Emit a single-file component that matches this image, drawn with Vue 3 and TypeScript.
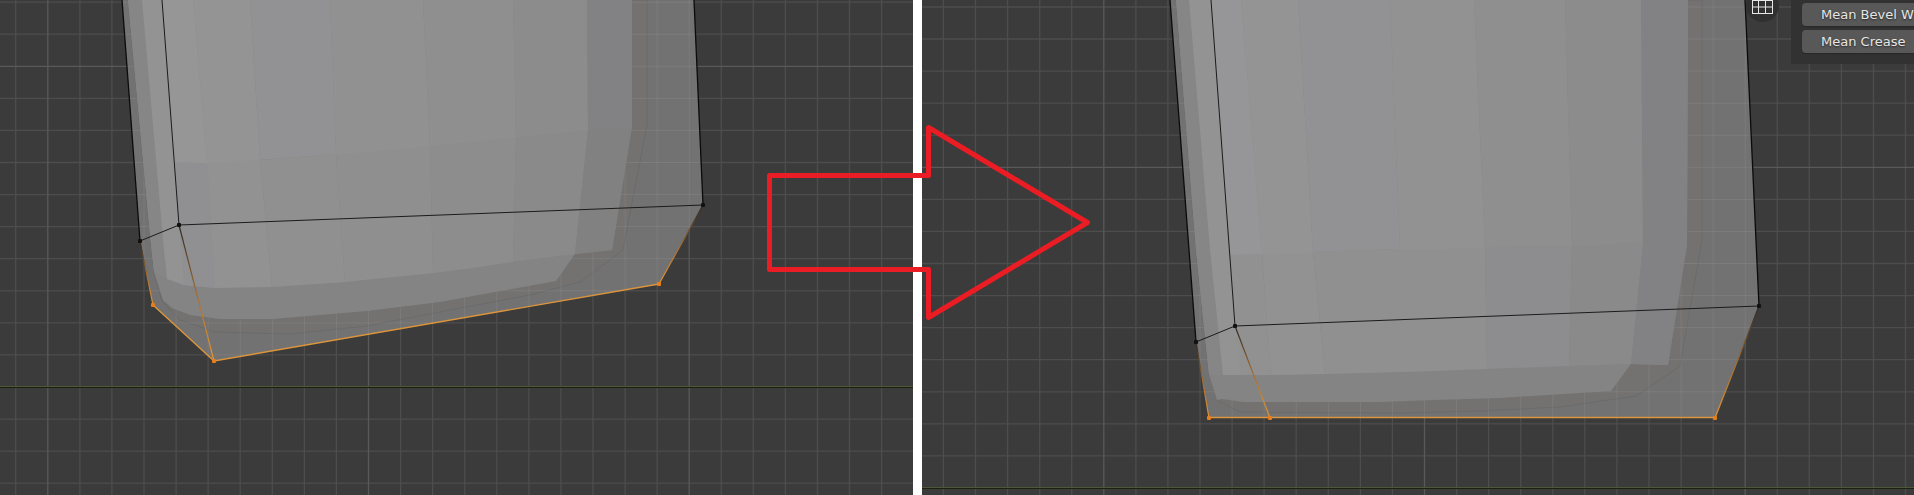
<script setup lang="ts">
interface Face { points: string; fill: string }
interface Vertex { x: number; y: number; selected: boolean }
interface View {
  id: string
  label: string
  x: number
  width: number
  gridX: number
  gridY: number
  axisY: number
  outline: string
  rim: Face[]
  faces: Face[]
  crease: string
  edges: string[]
  selected: string
  fades: { x1: number; y1: number; x2: number; y2: number }[]
  vertices: Vertex[]
}

const HEIGHT = 495
const STEP = 32.07

const views: View[] = [
  {
    id: 'before', label: 'Mesh before flattening', x: 0, width: 913,
    gridX: 47.8, gridY: 66.3, axisY: 387,
    outline: '122,0 140,241 153,305 214,361 659,284 703,205 694,0',
    rim: [
      { points: '128,0 151,245 154,272 162,301 180,320 215,332 290,334 367,326 450,310 530,295 580,282 623,250 647,125 647,0', fill: '#747271' },
    ],
    faces: [
      { points: '128,0 151,245 154,272 163,300 172,308 190,315 220,319 272,319 367,311 440,302 556,281 575,254 612,250 632,125 632,0', fill: '#848484' },
      { points: '128,0 151,245 154,272 162,276 167,279 163,240 142,0', fill: '#868686' },
      { points: '142,0 163,240 167,279 184,285 215,288 207,163 193,0', fill: '#939393' },
      { points: '162,0 174,162 207,163 193,0', fill: '#969696' },
      { points: '174,162 184,285 215,288 207,163', fill: '#929294' },
      { points: '193,0 207,163 215,288 272,287 260,160 250,0', fill: '#949494' },
      { points: '250,0 260,160 336,154 330,0', fill: '#929294' },
      { points: '260,160 272,287 345,282 336,154', fill: '#929292' },
      { points: '330,0 336,154 345,282 433,273 430,147 423,0', fill: '#919191' },
      { points: '423,0 430,147 433,273 480,267 513,262 516,137 513,0', fill: '#8f8f8f' },
      { points: '513,0 516,137 513,262 575,254 588,130 587,0', fill: '#8c8c8c' },
      { points: '587,0 588,130 632,127 632,0', fill: '#828284' },
      { points: '588,130 575,254 612,250 632,127', fill: '#818181' },
    ],
    crease: '174,162 207,163 367,152 440,145 588,130 575,254 480,267 367,280 272,287 215,288 184,285',
    edges: ['162,0 179,225', '140,241 179,225 703,205'],
    selected: '153,305 214,361 659,284',
    fades: [
      { x1: 140, y1: 241, x2: 153, y2: 305 },
      { x1: 179, y1: 225, x2: 214, y2: 361 },
      { x1: 703, y1: 205, x2: 659, y2: 284 },
    ],
    vertices: [
      { x: 140, y: 241, selected: false }, { x: 179, y: 225, selected: false }, { x: 703, y: 205, selected: false },
      { x: 153, y: 305, selected: true }, { x: 214, y: 361, selected: true }, { x: 659, y: 284, selected: true },
    ],
  },
  {
    id: 'after', label: 'Mesh after flattening', x: 922, width: 992,
    gridX: 1103.8, gridY: 167.3, axisY: 488,
    outline: '1170,0 1196,342 1209,418 1715,418 1759,306 1745,0',
    rim: [
      { points: '1176,0 1196,250 1209,375 1218,401 1240,412 1400,413 1480,411 1560,407 1636,396 1680,366 1702,240 1702,0', fill: '#747271' },
    ],
    faces: [
      { points: '1176,0 1196,250 1209,375 1217,400 1222,399 1244,402 1380,402 1434,400 1500,398 1611,391 1631,364 1668,365 1687,245 1688,0', fill: '#848484' },
      { points: '1176,0 1196,250 1209,375 1223,375 1210,250 1189,0', fill: '#868686' },
      { points: '1189,0 1210,250 1223,375 1271,375 1262,254 1241,0', fill: '#939393' },
      { points: '1211,0 1230,255 1262,254 1241,0', fill: '#969698' },
      { points: '1241,0 1262,254 1271,375 1325,374 1313,252 1298,0', fill: '#949494' },
      { points: '1298,0 1313,252 1400,249 1390,0', fill: '#929294' },
      { points: '1313,252 1325,374 1400,372 1400,249', fill: '#929292' },
      { points: '1390,0 1400,249 1400,372 1434,371 1487,369 1485,247 1474,0', fill: '#929292' },
      { points: '1474,0 1485,247 1572,246 1565,0', fill: '#8f8f8f' },
      { points: '1485,247 1487,369 1569,366 1572,246', fill: '#8f8f91' },
      { points: '1565,0 1572,246 1569,366 1631,364 1643,245 1641,0', fill: '#8c8c8c' },
      { points: '1641,0 1643,245 1631,364 1668,365 1687,240 1688,0', fill: '#828284' },
    ],
    crease: '1230,255 1380,250 1572,246 1643,242 1631,364 1434,371 1300,374 1240,375',
    edges: ['1211,0 1235,326', '1196,342 1235,326 1759,306'],
    selected: '1209,417.5 1715,417.5',
    fades: [
      { x1: 1196, y1: 342, x2: 1209, y2: 418 },
      { x1: 1235, y1: 326, x2: 1270, y2: 418 },
      { x1: 1759, y1: 306, x2: 1715, y2: 418 },
    ],
    vertices: [
      { x: 1196, y: 342, selected: false }, { x: 1235, y: 326, selected: false }, { x: 1759, y: 306, selected: false },
      { x: 1209, y: 418, selected: true }, { x: 1270, y: 418, selected: true }, { x: 1715, y: 418, selected: true },
    ],
  },
]

// Every tenth grid line, counted from the origin, is a major line.
function gridPath(view: View, major: boolean): string {
  const parts: string[] = []
  for (let i = -30; i <= 60; i++) {
    if ((i % 10 === 0) !== major) continue
    const x = view.gridX + i * STEP
    const y = view.gridY + i * STEP
    if (x > view.x && x < view.x + view.width) parts.push(`M${x.toFixed(1)} 0V${HEIGHT}`)
    if (y > 0 && y < HEIGHT) parts.push(`M${view.x} ${y.toFixed(1)}h${view.width}`)
  }
  return parts.join('')
}

function sideEdges(view: View): string[] {
  const pts = view.outline.split(' ')
  return [`${pts[0]} ${pts[1]}`, `${pts[pts.length - 2]} ${pts[pts.length - 1]}`]
}

const properties: string[] = ['Mean Bevel W', 'Mean Crease']
</script>

<template>
  <main class="comparison">
    <section v-for="view in views" :key="view.id" class="viewport" :class="view.id">
      <svg class="scene" :viewBox="`${view.x} 0 ${view.width} ${HEIGHT}`" role="img" :aria-label="view.label">
        <defs>
          <clipPath :id="`${view.id}-clip`"><polygon :points="view.outline" /></clipPath>
          <linearGradient
            v-for="(f, i) in view.fades" :id="`${view.id}-fade-${i}`" :key="i"
            gradientUnits="userSpaceOnUse" :x1="f.x1" :y1="f.y1" :x2="f.x2" :y2="f.y2"
          >
            <stop offset="0" stop-color="#2b2521" />
            <stop offset=".5" stop-color="#a06c32" />
            <stop offset="1" stop-color="#ea962f" />
          </linearGradient>
        </defs>

        <path class="grid minor" :d="gridPath(view, false)" />
        <path class="grid major" :d="gridPath(view, true)" />
        <rect class="axis-light" :x="view.x" :y="view.axisY - 1" :width="view.width" height="1" />
        <rect class="axis-dark" :x="view.x" :y="view.axisY" :width="view.width" height="1" />

        <polygon :points="view.outline" fill="#727272" />
        <polygon v-for="(r, i) in view.rim" :key="`r${i}`" class="rim" :points="r.points" :fill="r.fill" />
        <path class="veil" :d="gridPath(view, false)" :clip-path="`url(#${view.id}-clip)`" />
        <path class="veil" :d="gridPath(view, true)" :clip-path="`url(#${view.id}-clip)`" />
        <polygon v-for="(f, i) in view.faces" :key="`f${i}`" :points="f.points" :fill="f.fill" />
        <polygon class="crease" :points="view.crease" />
        <path class="veil faint" :d="gridPath(view, false)" :clip-path="`url(#${view.id}-clip)`" />

        <polyline v-for="e in sideEdges(view)" :key="e" class="side" :points="e" />
        <polyline v-for="e in view.edges" :key="e" class="edge" :points="e" />
        <line
          v-for="(f, i) in view.fades" :key="`l${i}`" class="fade" :stroke="`url(#${view.id}-fade-${i})`"
          :x1="f.x1" :y1="f.y1" :x2="f.x2" :y2="f.y2"
        />
        <polyline class="selected" :points="view.selected" />
        <rect
          v-for="v in view.vertices" :key="`${v.x}-${v.y}`" :x="v.x - 2" :y="v.y - 2" width="4" height="4" rx="1"
          :fill="v.selected ? '#e87d1c' : '#111111'"
        />
      </svg>

      <template v-if="view.id === 'after'">
        <button class="ortho" type="button" aria-label="Toggle orthographic view">
          <svg width="21" height="14" viewBox="0 0 21 14" aria-hidden="true">
            <path d="M0 .5H21M0 7H21M0 13.5H21M.5 0V14M6.5 0V14M13.5 0V14M20.5 0V14" />
          </svg>
        </button>
        <aside class="panel">
          <button v-for="name in properties" :key="name" class="property" type="button">{{ name }}</button>
        </aside>
      </template>
    </section>

    <svg class="arrow" viewBox="0 0 1914 495" aria-hidden="true">
      <polygon points="769.5,175.5 928.5,175.5 928.5,127.5 1087.5,222.5 928.5,317.5 928.5,269.5 769.5,269.5" />
    </svg>
  </main>
</template>

<style>
body {
  margin: 0;
  background: #ffffff;
}
</style>

<style scoped>
.comparison {
  position: relative;
  display: grid;
  grid-template-columns: 913fr 992fr;
  gap: 9px;
  overflow: hidden;
}

.viewport {
  position: relative;
  min-width: 0;
  overflow: hidden;
  background: #3b3b3b;
}

.scene {
  display: block;
  width: 100%;
  height: auto;
}

.grid {
  fill: none;
  stroke-width: 1.3;
}

.minor { stroke: #4d4d4d; }
.major { stroke: #595959; }
.axis-light { fill: #4d5837; }
.axis-dark { fill: #1c210f; }

.rim {
  stroke: #6b6b6b;
  stroke-width: 1;
}

.veil {
  fill: none;
  stroke: #ffffff;
  stroke-opacity: .07;
}

.faint { stroke-opacity: .01; }

.crease { fill: rgba(0, 0, 0, .012); }

.side,
.edge,
.fade,
.selected {
  fill: none;
}

.side {
  stroke: #0b0b0b;
  stroke-width: 1.3;
}

.edge {
  stroke: #1b1b1b;
  stroke-width: 1;
}

.fade { stroke-width: 1.2; }

.selected {
  stroke: #dc953c;
  stroke-width: 1.4;
}

.arrow {
  position: absolute;
  top: 0;
  left: 0;
  width: 100%;
  height: auto;
  pointer-events: none;
}

.arrow polygon {
  fill: none;
  stroke: #ea1c24;
  stroke-width: 5;
  stroke-linejoin: round;
}

.ortho {
  position: absolute;
  top: -11px;
  right: 135px;
  display: grid;
  place-items: end center;
  box-sizing: border-box;
  width: 33px;
  height: 33px;
  padding: 0 0 8px;
  border: 0;
  border-radius: 50%;
  background: #303030;
}

.ortho path {
  fill: none;
  stroke: #e6e6e6;
}

.panel {
  position: absolute;
  top: 0;
  right: 0;
  display: flex;
  flex-direction: column;
  gap: 4px;
  box-sizing: border-box;
  width: 123px;
  padding: 3px 0 11px 11px;
  background: #323232;
  overflow: hidden;
}

.property {
  height: 23px;
  padding: 0 0 0 19px;
  border: 0;
  border-radius: 4px 0 0 4px;
  background: #585858;
  box-shadow: 0 1px 1px #272727;
  color: #e6e6e6;
  font: 13px/23px "DejaVu Sans", sans-serif;
  text-align: left;
  text-shadow: 0 1px 2px rgba(0, 0, 0, .6);
  white-space: nowrap;
  overflow: hidden;
}
</style>
